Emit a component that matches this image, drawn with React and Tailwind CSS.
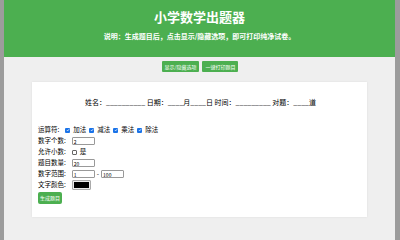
import React from "react";

const font = { fontFamily: '"Noto Sans CJK SC", "Liberation Sans", sans-serif' };

function Check({ label }) {
  return (
    <span className="flex items-center gap-[3px] mr-[3px]">
      <span className="w-[5px] h-[5px] rounded-[1px] bg-[#1a73e8] flex items-center justify-center">
        <svg width="4" height="4" viewBox="0 0 10 10">
          <path d="M2 5 L4.2 7.2 L8 2.8" stroke="white" strokeWidth="1.8" fill="none" />
        </svg>
      </span>
      {label}
    </span>
  );
}

function Row({ label, children }) {
  return (
    <div className="flex items-center h-[11px]">
      <span className="mr-[6px]">{label}</span>
      {children}
    </div>
  );
}

function Box({ value, w = "w-[23px]" }) {
  return (
    <span className={`${w} h-[8px] border border-[#999] rounded-[1px] bg-white flex items-center px-[1px] text-[5px] leading-none`}>
      {value}
    </span>
  );
}

export default function App() {
  return (
    <div className="w-[400px] h-[240px] flex bg-[#efefef] overflow-hidden" style={font}>
      <div className="w-[4px] bg-[#9c9c9c]" />
      <div className="flex-1 flex flex-col">
        {/* Header */}
        <header className="h-[57px] bg-[#4caf50] flex flex-col items-center text-white">
          <h1 className="mt-[8px] text-[13px] font-bold leading-[18px]">小学数学出题器</h1>
          <p className="mt-[5px] text-[7px] font-bold leading-[10px]">
            说明：生成题目后，点击显示/隐藏选项，即可打印纯净试卷。
          </p>
        </header>

        {/* Buttons */}
        <div className="flex justify-center gap-[3px] mt-[4px] pl-[1px]">
          <button className="h-[11px] px-[3px] bg-[#4caf50] text-white text-[5px] rounded-[1px] leading-none">
            显示/隐藏选项
          </button>
          <button className="h-[11px] px-[3px] bg-[#4caf50] text-white text-[5px] rounded-[1px] leading-none">
            一键打印题目
          </button>
        </div>

        {/* Card */}
        <div className="mx-[28px] mt-[10px] h-[135px] bg-white shadow-[0_0_2px_rgba(0,0,0,0.08)] text-[6.5px] text-black px-[6px]">
          <p className="text-center text-[7px] mt-[15px] pl-[2px]">
            姓名：__________ 日期：____月____日 时间：_________ 对题：____道
          </p>
          <div className="mt-[17px] flex flex-col">
            <Row label="运算符:">
              <Check label="加法" />
              <Check label="减法" />
              <Check label="乘法" />
              <Check label="除法" />
            </Row>
            <Row label="数字个数:">
              <Box value="2" />
            </Row>
            <Row label="允许小数:">
              <span className="flex items-center gap-[3px]">
                <span className="w-[5px] h-[5px] border border-[#666] rounded-[1px]" />
                是
              </span>
            </Row>
            <Row label="题目数量:">
              <Box value="20" />
            </Row>
            <Row label="数字范围:">
              <Box value="1" />
              <span className="mx-[2px]">-</span>
              <Box value="100" />
            </Row>
            <Row label="文字颜色:">
              <span className="w-[19px] h-[10px] border border-[#aaa] rounded-[1px] bg-[#eee] flex items-center justify-center">
                <span className="w-[15px] h-[6px] bg-black" />
              </span>
            </Row>
            <div className="mt-[1px]">
              <button className="h-[12px] px-[2px] bg-[#4caf50] text-white text-[5px] rounded-[2px] leading-none">
                生成题目
              </button>
            </div>
          </div>
        </div>
      </div>
      <div className="w-[5px] bg-[#9c9c9c]" />
    </div>
  );
}
